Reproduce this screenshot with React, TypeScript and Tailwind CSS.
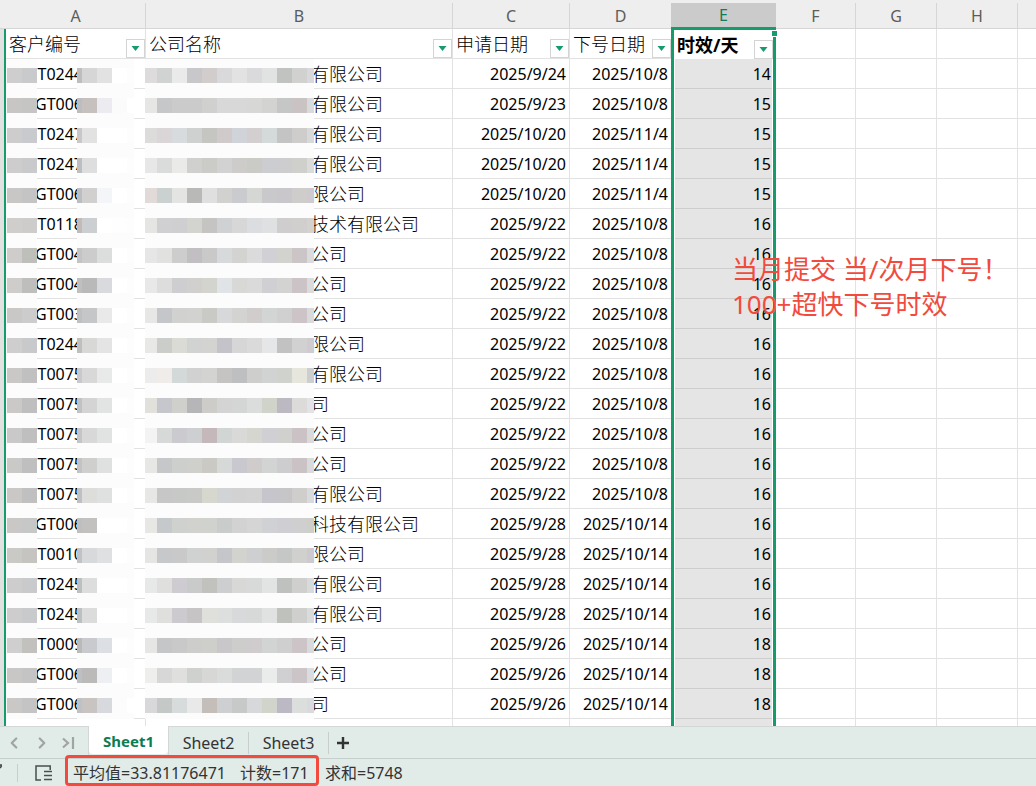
import { ChevronLeft, ChevronRight } from "lucide-react";
import { clsx } from "clsx";

type Row = {
  code: string;
  company: string;
  applied: string;
  issued: string;
  days: number;
  lead: string;
  tail: string;
  name: string;
};

const row = (
  code: string,
  company: string,
  applied: string,
  issued: string,
  days: number,
  lead: string,
  tail: string,
  name: string
): Row => ({ code, company, applied, issued, days, lead, tail, name });

// lead, tail and name hold the colours of the redacted blocks
const rows: Row[] = [
  row("T0244", "有限公司", "2025/9/24", "2025/10/8", 14, "cecece c9cacb", "bdbebe d6d6d7 e2e2e3 ffffff fdfdfd", "dddbdc d0d3d1 eaeaea c8c8cb d0cdcc d9d9db e2e2e2 dadadc e1e3e2 c1c3c0 d1d1cf d9d9db"),
  row("GT006", "有限公司", "2025/9/23", "2025/10/8", 15, "c8c6c5 c5c5c4", "bbbdc1 c6c1bf ebebf0 fbfbfc ffffff", "e6e6e4 c6c7c9 cbcbcb cbcbcb d0d0ce d7d8d7 d8d8d8 d7d7d5 d3d3d2 c4c7c6 c9c3c4 d8dadb"),
  row("T0247", "有限公司", "2025/10/20", "2025/11/4", 15, "cdcdce c8cacd", "c8c8ca e2e2e2 ffffff ffffff fdfdfd", "dcdcdb dad5d7 d7dbdd cfd1d0 c5c5c2 d0cacb d0d3d7 d3cfd1 d4dada c3c4c3 cecdcb d8d9db"),
  row("T0247", "有限公司", "2025/10/20", "2025/11/4", 15, "cdcdce c8cacb", "bcbfc1 dedede ffffff ffffff fdfdfd", "e7e7e8 dadcdb eaeae9 d0d1cf cbcbc8 d2d2d3 ceccca cacac6 cccdd0 cdcdcf cfcfcc dbdbdb"),
  row("GT006", "限公司", "2025/10/20", "2025/11/4", 15, "c8c7c5 c5c4c4", "babdc1 d2d0ce f4f5f8 ffffff fdfdfd", "e1dad8 cbd0d1 e4e5e2 b9bab8 dfdfdf d1d1d0 cacbce d5d7d5 c9c9cb c9c7cc cfcccc cecad0"),
  row("GT0118", "技术有限公司", "2025/9/22", "2025/10/8", 16, "cfcecc cdcccb", "c2bbb7 cbcfd2 ffffff fefefe fdfdfd", "e5e5e3 d0d0d2 cfcfd1 d3d4cf c6c4c2 d0d1d2 d8d7d7 dcdde0 dfe0e1 cfcdcd d1cfcd d4d2cf"),
  row("GT004", "公司", "2025/9/22", "2025/10/8", 16, "cfcdcc bebebb", "c4c3c5 cbcccb dcdddd ffffff fdfdfd", "e6e6e6 e1e2e0 cecdce c1bfc2 cac9ca d8d9db d3d4d1 dbdbdb d0d0d5 d2d2cf ccc5c7 dadbdd"),
  row("GT004", "公司", "2025/9/22", "2025/10/8", 16, "cfcdcb bebfbc", "bebfc0 b9b9b9 d9dadd ffffff fdfdfd", "e7e8e7 dcdddc cecdd0 d2d0ce d4d4cf e1e4e6 d8d8d7 dadada d0d0d4 d3d3d1 cbc3c5 dbdbdb"),
  row("GT003", "公司", "2025/9/22", "2025/10/8", 16, "c9c8c7 cdcccd", "bec0c1 c5c6c8 e9e9e9 ffffff fdfdfd", "e7e7e5 c5c6c9 d1d2d0 d2d2d0 c9c9c6 d7d8da d3d3d2 d2cdcd d2d5d3 d0d0d1 ccc4c6 d8dadc"),
  row("T0244", "限公司", "2025/9/22", "2025/10/8", 16, "cecece c8c9ca", "bebfbf d8d8d7 e4e4e4 ffffff fdfdfd", "e8e8e7 cbcdcb dbdbd6 d1d3d2 d3d3d1 c4c3c9 d5d6d5 dbdada e5e6e8 c3c2c2 d0d1d0 d0cbd0"),
  row("T0075", "有限公司", "2025/9/22", "2025/10/8", 16, "c9c8c7 bfc0bf", "c9c8cb d7d8d7 e8eaea ffffff fdfdfd", "ececec f0ece9 d3d9d8 d1d1d1 d3d3d1 c6c3c3 bebfc1 cececd d0d3d1 d0d2ce e7e6dd cdcecf"),
  row("T0075", "司", "2025/9/22", "2025/10/8", 16, "cac9c8 bfbfbf", "c2c2c5 d3d4d3 e1e4e3 ffffff fdfdfd", "e1e0da c6c7cc cfcfcc b6b6b8 cdccc8 d5d4d4 d4d5d5 dadddb d0d3ca bdb9c3 dddada e1e3e7"),
  row("T0075", "公司", "2025/9/22", "2025/10/8", 16, "cac9c9 bebfbe", "c5c5c8 d7d8d7 e1e3e2 ffffff fdfdfd", "f3f3f3 d7d9d8 cbcbcf cecfd0 c4b8bb d1d5d4 d9d9d7 d6d6d1 d0d0d4 d0d0ce cac2c4 dadada"),
  row("T0075", "公司", "2025/9/22", "2025/10/8", 16, "c9c9c8 bebfbe", "c3c3c5 cfcfce dfe1e1 ffffff fdfdfd", "e7e7e5 c5c7c9 cdcfcd cfcfcc cbc9c4 d7d9d8 c8c8ce d1cccc d1d4d2 cdcdcf cac2c4 d8dadb"),
  row("T0075", "有限公司", "2025/9/22", "2025/10/8", 16, "c9c8c7 bfc0bf", "bfc0c3 dddedc dfe1e1 ffffff fdfdfd", "e7e7e5 c7c7c8 c7c9c7 c9c9c8 d6d7ce d2d3d5 d3d2d3 d2d3d2 c6c5cb c6c6c8 cfcecc d8dadc"),
  row("GT006", "科技有限公司", "2025/9/28", "2025/10/14", 16, "c9c8c7 c6c7c7", "bebfc1 c2c1bf ffffff ffffff fdfdfd", "e7e8e6 c6c9cb cfd1ce d1d2cd d0d2cd cacccb d1d2d1 d4d5d4 d0d1d4 cfcfd3 cecfce cfcfc9"),
  row("T0010", "限公司", "2025/9/28", "2025/10/14", 16, "c9c9c6 c5c4c1", "bfc3c6 d7d9da dfe0e2 ffffff fdfdfd", "e5e5e4 c7c8ca c9c9c9 d0d2d1 d1d1cf c5c6c9 d2d3cf cecfd1 cbccca c5c6c6 d0d0ce cdc9cf"),
  row("T0245", "有限公司", "2025/9/28", "2025/10/14", 16, "cdcdce c8cacb", "bcc0c1 dcdddc ffffff ffffff fdfdfd", "e7e8e8 dfe0de ceccd0 c9caca c1c2be cdced0 d8d9d6 d8d9d9 e1e4e2 bec1bd cfd0cd d9dbda"),
  row("T0245", "有限公司", "2025/9/28", "2025/10/14", 16, "cdcdce c8cacb", "bdc0c1 dcdcdd ffffff ffffff fdfdfd", "e7e8e8 dfe0de cdcacf c6c4c4 dfe0dc dddfdf d8d9da d7d8d8 e0e2e1 bfc1bd cfd0cd d9dbdc"),
  row("GT0009", "公司", "2025/9/26", "2025/10/14", 18, "cfcfcf c2c1be", "bababa c8cacd dcdfe4 ffffff fdfdfd", "e6e7e5 c5c6c8 c8c9c8 cdcecc cececa c9c7c9 cdcdcb d0cbcc d1d4d3 cfcfd0 ccc4c6 d8dadc"),
  row("GT006", "公司", "2025/9/26", "2025/10/14", 18, "c8c7c5 c5c4c4", "bcbfc3 bcbab8 edeff2 ffffff fdfdfd", "eeeeec d8d7d8 dfdfdd cfd1cf d7d8d6 dadcdb d2d3d4 d2d3d4 eaebeb d0cfd1 ccc5c7 dbdcdf"),
  row("GT006", "司", "2025/9/26", "2025/10/14", 18, "c9c8c6 c5c4c4", "bec1c5 c7c4c1 d8d9dc fcfcfc ffffff", "d8d8da c4c8c6 d8dbdc e9e9ea c4beba cecfd1 c7c9c8 d7d8d9 d0d4cb bcb8c4 dcdddd d9dade"),
];

const emptyColumns = ["F", "G", "H", ""];
const line = "border-[#e2e2e2]";
const greenEdge = "border-x-[3px] border-x-[#169b6b]";

const Mosaic = ({
  colors,
  first = "w-[15px]",
  last = "w-[15px]",
}: {
  colors: string;
  first?: string;
  last?: string;
}) => {
  const blocks = colors.split(" ");

  return (
    <div className="flex h-[30px] shrink-0 items-stretch bg-[#fcfcfc]" aria-hidden="true">
      {blocks.map((color, index) => (
        <span
          key={index}
          className={clsx(
            "mt-[9px] mb-1.5 block",
            index === 0 ? first : index === blocks.length - 1 ? last : "w-[15px]"
          )}
          style={{ backgroundColor: `#${color}` }}
        />
      ))}
    </div>
  );
};

const FilterHeader = ({ label, bold }: { label: string; bold?: boolean }) => (
  <div className="flex h-[29px] items-end justify-between">
    <span
      className={clsx(
        "self-center pl-[3px] text-lg leading-7 whitespace-nowrap",
        bold ? "font-bold" : "font-light"
      )}
    >
      {label}
    </span>
    <button
      type="button"
      aria-label={`筛选 ${label}`}
      className="flex size-[19px] shrink-0 items-center justify-center border border-[#d4d4d4] bg-white"
    >
      <svg viewBox="0 0 9 5" className="h-[5px] w-[9px]" fill="#169b6b">
        <path d="M0.5 0h8L4.5 5z" />
      </svg>
    </button>
  </div>
);

const Sheet = () => (
  <table className="w-full table-fixed border-separate border-spacing-0 text-base text-black">
    <colgroup>
      <col className="w-1.5" />
      <col className="w-[140px]" />
      <col className="w-[307px]" />
      <col className="w-[117px]" />
      <col className="w-[101px]" />
      <col className="w-[105px]" />
      <col className="w-20" />
      <col className="w-[81px]" />
      <col className="w-[81px]" />
      <col />
    </colgroup>
    <thead>
      <tr className="h-[26px] bg-[#eeeeee] leading-6 text-[#5c5c5c]">
        <td className="border-b border-[#d6d6d6] p-0" />
        {["A", "B", "C", "D"].map((letter) => (
          <th
            key={letter}
            scope="col"
            className={clsx(
              "border-b border-[#d6d6d6] p-0 font-normal",
              letter !== "D" && "border-r"
            )}
          >
            {letter}
          </th>
        ))}
        <th
          scope="col"
          className="border-b-2 border-b-[#169b6b] bg-[#cbcbcb] p-0 font-normal text-[#0f7d55]"
        >
          E
        </th>
        {emptyColumns.map((letter) => (
          <th
            key={letter}
            scope="col"
            className={clsx(
              "border-b border-[#d6d6d6] p-0 font-normal",
              letter && "border-r"
            )}
          >
            {letter}
          </th>
        ))}
      </tr>
      <tr className="h-[30px] text-left">
        <td className="border-r-2 border-[#169b6b] bg-[#e1e1e1] p-0" />
        <th className={clsx("border-r border-b p-0", line)}>
          <FilterHeader label="客户编号" />
        </th>
        <th className={clsx("border-r border-b p-0", line)}>
          <FilterHeader label="公司名称" />
        </th>
        <th className={clsx("border-r border-b p-0", line)}>
          <FilterHeader label="申请日期" />
        </th>
        <th className={clsx("border-b p-0", line)}>
          <FilterHeader label="下号日期" />
        </th>
        <th
          className={clsx(
            "relative border-t border-t-[#169b6b] p-0",
            greenEdge
          )}
        >
          <FilterHeader label="时效/天" bold />
          <span className="absolute top-0 -right-[5px] size-[7px] border border-white bg-[#169b6b]" />
        </th>
        {emptyColumns.map((letter) => (
          <td
            key={letter}
            className={clsx("border-b p-0", letter && "border-r", line)}
          />
        ))}
      </tr>
    </thead>
    <tbody>
      {rows.map((item, index) => (
        <tr key={index} className="h-[30px] whitespace-nowrap">
          <td className="border-r-2 border-[#169b6b] bg-[#e1e1e1] p-0" />
          <td className="p-0">
            <div className="flex h-[30px] pl-px">
              <Mosaic colors={item.lead} />
              <div
                className={clsx(
                  "flex w-10 shrink-0 justify-end overflow-hidden border-b",
                  line
                )}
              >
                <span className="-mr-1.5 leading-[30px]">{item.code}</span>
              </div>
              <Mosaic colors={item.tail} first="w-[5px]" last="w-[7px]" />
              <div className={clsx("grow border-b", line)} />
            </div>
          </td>
          <td className={clsx("border-r p-0", line)}>
            <div className="-ml-px flex h-[30px]">
              <Mosaic colors={item.name} first="w-3" last="w-[7px]" />
              <div className={clsx("grow overflow-hidden border-b", line)}>
                <span className="-ml-[3px] text-lg leading-[30px] font-light">
                  {item.company}
                </span>
              </div>
            </div>
          </td>
          <td className={clsx("border-r border-b p-0 pr-[3px] text-right", line)}>
            {item.applied}
          </td>
          <td className={clsx("border-b p-0 pr-[3px] text-right", line)}>
            {item.issued}
          </td>
          <td className={clsx("bg-white p-0 px-px text-right", greenEdge)}>
            <div className="h-[30px] border-b border-[#cecece] bg-[#e5e5e5] pr-px leading-[30px]">
              {item.days}
            </div>
          </td>
          {emptyColumns.map((letter) => (
            <td
              key={letter}
              className={clsx("border-b p-0", letter && "border-r", line)}
            />
          ))}
        </tr>
      ))}
      <tr className="h-[30px]">
        <td className="border-r-2 border-[#169b6b] bg-[#e1e1e1] p-0" />
        <td className={clsx("border-r p-0", line)} />
        <td className={clsx("border-r p-0", line)} />
        <td className={clsx("border-r p-0", line)} />
        <td className="p-0" />
        <td className={clsx("bg-white p-0 px-px", greenEdge)}>
          <div className="h-[30px] bg-[#e5e5e5]" />
        </td>
        {emptyColumns.map((letter) => (
          <td
            key={letter}
            className={clsx("p-0", letter && "border-r", line)}
          />
        ))}
      </tr>
    </tbody>
  </table>
);

const SheetTabs = () => (
  <nav className="flex h-8 shrink-0 items-stretch text-[#333]" aria-label="工作表">
    <div className="flex w-[89px] items-center border-t border-r border-[#d3d8d6] text-[#a0a5a3]">
      <button type="button" aria-label="上一个" className="flex w-7 justify-center">
        <ChevronLeft className="size-[18px]" strokeWidth={3} />
      </button>
      <button type="button" aria-label="下一个" className="flex w-7 justify-center">
        <ChevronRight className="size-[18px]" strokeWidth={3} />
      </button>
      <button type="button" aria-label="最后一个" className="flex w-6 justify-center">
        <svg viewBox="0 0 14 14" className="size-3.5" fill="none" stroke="currentColor" strokeWidth="2.2">
          <path d="M2 2.5l5 4.5-5 4.500M12 1v12" />
        </svg>
      </button>
    </div>
    <button
      type="button"
      className="mb-1 w-[79px] rounded-b bg-white pt-0.5 text-[15px] font-bold text-[#0b7d51]"
    >
      Sheet1
    </button>
    <div className="flex grow items-center border-t border-l border-[#d3d8d6]">
      <button type="button" className="h-[22px] w-20 border-r border-[#c7cecb] leading-5">
        Sheet2
      </button>
      <button type="button" className="h-[22px] w-20 border-r border-[#c7cecb] leading-5">
        Sheet3
      </button>
      <button type="button" aria-label="新建工作表" className="flex w-7 justify-center">
        <svg viewBox="0 0 12 12" className="size-3" stroke="#333" strokeWidth="2.4">
          <path d="M6 0v12M0 6h12" />
        </svg>
      </button>
    </div>
  </nav>
);

const StatusBar = () => (
  <footer className="flex h-7 shrink-0 items-center border-t border-[#c5cfcc] text-base leading-5 whitespace-nowrap text-[#333]">
    <div className="flex h-[18px] w-[18px] border-r border-[#c7cecb]">
      <svg viewBox="0 0 4 8" className="h-2 w-1" fill="none" stroke="#444" strokeWidth="1.5">
        <path d="M0 1h1.2v1.5L0 4" />
      </svg>
    </div>
    <button type="button" aria-label="视图" className="ml-[17px]">
      <svg viewBox="0 0 18 16" className="h-4 w-[18px]" fill="none" stroke="#4a4f4d" strokeWidth="1.5">
        <path d="M15.2 5V1H1v14h5M9 6.500h4M9 10.500h8M9 14.500h8M13 6.500h4" />
      </svg>
    </button>
    <div className="relative ml-5 flex">
      <span className="w-[167px]">平均值=33.81176471</span>
      <span className="w-[85px]">计数=171</span>
      <span className="absolute -top-2 -left-2 h-[31px] w-[254px] rounded border-3 border-[#f24a3d]" />
    </div>
    <span>求和=5748</span>
  </footer>
);

export default function App() {
  return (
    <div className="flex h-screen min-w-[1036px] flex-col overflow-hidden bg-[#e1ebe8] font-['Noto_Sans','Noto_Sans_CJK_SC',sans-serif]">
      <main className="relative min-h-0 flex-1 overflow-hidden bg-white">
        <div className="h-[3px] bg-[#eeeeee]" />
        <Sheet />
        <p className="absolute top-[252px] left-[732px] text-[26px] leading-[35px] whitespace-nowrap text-[#f24a3d]">
          当月提交 当/次月下号！
          <br />
          100+超快下号时效
        </p>
      </main>
      <SheetTabs />
      <StatusBar />
    </div>
  );
}
